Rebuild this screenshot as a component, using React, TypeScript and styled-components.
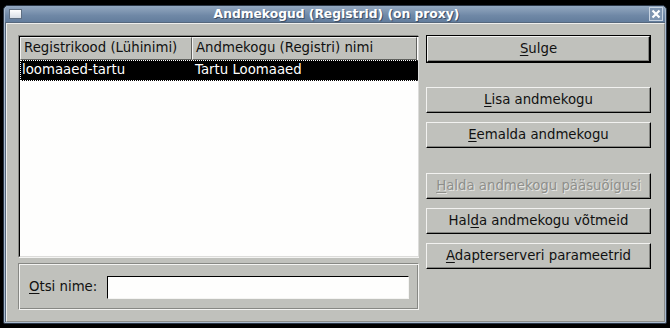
import React from 'react';
import styled, {createGlobalStyle} from 'styled-components';

const GlobalStyle = createGlobalStyle`
  html, body {
    margin: 0;
    padding: 0;
    background: #000;
  }
  body {
    font-family: "DejaVu Sans", "Liberation Sans", sans-serif;
    font-size: 13.3px;
  }
`;

const face = '#c0c1bc';

const Screen = styled.div`
  width: 670px;
  height: 328px;
  box-sizing: border-box;
  padding: 5px 3px 4px 3px;
  background: #000;
`;

const Window = styled.div`
  display: flex;
  flex-direction: column;
  width: 664px;
  height: 319px;
  box-sizing: border-box;
  border: 1px solid #2a3646;
  border-radius: 5px 5px 2px 2px;
  background: #a9bace;
  padding: 0 1px 1px 1px;
`;

const TitleBar = styled.div`
  display: flex;
  align-items: center;
  height: 16px;
  padding: 0 2px 0 4px;
  border-radius: 4px 4px 0 0;
  background: linear-gradient(#94a8c0, #6f88a6 60%, #637d9c);
  color: #fff;
  font-weight: bold;
  font-size: 12.3px;
`;

const WinIcon = styled.div`
  width: 11px;
  height: 8px;
  border: 1px solid #5f6f82;
  background: linear-gradient(#ffffff, #d8dee6);
`;

const Title = styled.div`
  flex: 1;
  text-align: center;
  text-shadow: 1px 1px 0 #3d4f66;
  line-height: 16px;
  padding-left: 2px;
`;

const CloseBox = styled.div`
  width: 12px;
  height: 12px;
  border: 1px solid #c8d4e2;
  background: #7d94b0;
  display: flex;
  align-items: center;
  justify-content: center;
`;

const Client = styled.div`
  flex: 1;
  display: flex;
  background: ${face};
  border-top: 1px solid #55677c;
  border-left: 1px solid #55677c;
`;

const Panel = styled.div`
  flex: 1;
  display: flex;
  gap: 7px;
  padding: 11px 12px 10px 11px;
  border-top: 1px solid #eeeeec;
  border-left: 1px solid #eeeeec;
  border-right: 1px solid #8d8e8a;
  border-bottom: 1px solid #8d8e8a;
`;

const LeftColumn = styled.div`
  display: flex;
  flex-direction: column;
  gap: 5px;
  width: 401px;
`;

const Table = styled.div`
  height: 223px;
  box-sizing: border-box;
  border-top: 1px solid #878884;
  border-left: 1px solid #878884;
  border-right: 1px solid #f4f4f2;
  border-bottom: 1px solid #f4f4f2;
  display: flex;
`;

const TableInner = styled.div`
  flex: 1;
  border-top: 1px solid #000;
  border-left: 1px solid #000;
  border-right: 1px solid #dcdcda;
  border-bottom: 1px solid #dcdcda;
  background: #fefefd;
`;

const HeaderRow = styled.div`
  display: flex;
  height: 23px;
`;

const HeaderCell = styled.div<{ $w: number }>`
  width: ${p => p.$w}px;
  box-sizing: border-box;
  background: ${face};
  border-top: 1px solid #f2f2f0;
  border-left: 1px solid #f2f2f0;
  border-right: 1px solid #60615e;
  border-bottom: 1px solid #60615e;
  padding-left: 3px;
  line-height: 20px;
  color: #111;
  white-space: nowrap;
  overflow: hidden;
`;

const DataRow = styled.div<{ $selected?: boolean }>`
  display: flex;
  height: 21px;
  box-sizing: border-box;
  background: ${p => (p.$selected ? '#000' : 'transparent')};
  color: ${p => (p.$selected ? '#fff' : '#000')};
  border: 1px dotted ${p => (p.$selected ? '#fff' : 'transparent')};
  border-right: 1px dotted #000;
  line-height: 18px;
`;

const DataCell = styled.div<{ $w: number }>`
  width: ${p => p.$w}px;
  padding-left: 1px;
  white-space: nowrap;
`;

const SearchGroup = styled.div`
  height: 47px;
  box-sizing: border-box;
  display: flex;
  align-items: center;
  gap: 10px;
  padding: 0 9px 0 10px;
  border-top: 1px solid #878884;
  border-left: 1px solid #878884;
  border-right: 1px solid #f4f4f2;
  border-bottom: 1px solid #f4f4f2;
  box-shadow: inset 1px 1px 0 #f4f4f2, inset -1px -1px 0 #878884;
  color: #111;
`;

const SearchInput = styled.input`
  flex: 1;
  height: 23px;
  box-sizing: border-box;
  margin: 1px 0 0 0;
  border-top: 1px solid #000;
  border-left: 1px solid #000;
  border-right: 1px solid #f4f4f2;
  border-bottom: 1px solid #f4f4f2;
  background: #fefefd;
  outline: none;
  font: inherit;
`;

const RightColumn = styled.div`
  display: flex;
  flex-direction: column;
  width: 225px;
`;

const DefaultFrame = styled.div`
  border: 1px solid #000;
  margin-bottom: 24px;
`;

const Button = styled.button<{ $gap?: number }>`
  display: block;
  width: 100%;
  height: 26px;
  margin: ${p => p.$gap ?? 0}px 0 0 0;
  padding: 0;
  box-sizing: border-box;
  background: ${face};
  border-top: 1px solid #f2f2f0;
  border-left: 1px solid #f2f2f0;
  border-right: 1px solid #000;
  border-bottom: 1px solid #000;
  box-shadow: inset -1px -1px 0 #838480;
  font: inherit;
  color: #111;
  text-align: center;
  line-height: 22px;
  white-space: nowrap;

  &:disabled {
    color: #8e8f8b;
    text-shadow: 1px 1px 0 #e6e6e4;
  }
`;

const Key = styled.span`
  text-decoration: underline;
  text-underline-offset: 2px;
`;

export default function App() {
  return (
    <>
      <GlobalStyle/>
      <Screen>
        <Window>
          <TitleBar>
            <WinIcon/>
            <Title>Andmekogud (Registrid) (on proxy)</Title>
            <CloseBox>
              <svg width="10" height="10" viewBox="0 0 10 10">
                <path d="M1.5 1.5 L8.5 8.5 M8.5 1.5 L1.5 8.5" stroke="#fff" strokeWidth="2.2"/>
              </svg>
            </CloseBox>
          </TitleBar>
          <Client>
            <Panel>
              <LeftColumn>
                <Table>
                  <TableInner>
                    <HeaderRow>
                      <HeaderCell $w={172}>Registrikood (Lühinimi)</HeaderCell>
                      <HeaderCell $w={225}>Andmekogu (Registri) nimi</HeaderCell>
                    </HeaderRow>
                    <DataRow $selected>
                      <DataCell $w={172}>loomaaed-tartu</DataCell>
                      <DataCell $w={222}>Tartu Loomaaed</DataCell>
                    </DataRow>
                  </TableInner>
                </Table>
                <SearchGroup>
                  <span><Key>O</Key>tsi nime:</span>
                  <SearchInput/>
                </SearchGroup>
              </LeftColumn>
              <RightColumn>
                <DefaultFrame>
                  <Button><Key>S</Key>ulge</Button>
                </DefaultFrame>
                <Button><Key>L</Key>isa andmekogu</Button>
                <Button $gap={9}><Key>E</Key>emalda andmekogu</Button>
                <Button $gap={25} disabled><Key>H</Key>alda andmekogu pääsuõigusi</Button>
                <Button $gap={9}>Hal<Key>d</Key>a andmekogu võtmeid</Button>
                <Button $gap={9}><Key>A</Key>dapterserveri parameetrid</Button>
              </RightColumn>
            </Panel>
          </Client>
        </Window>
      </Screen>
    </>
  );
}
